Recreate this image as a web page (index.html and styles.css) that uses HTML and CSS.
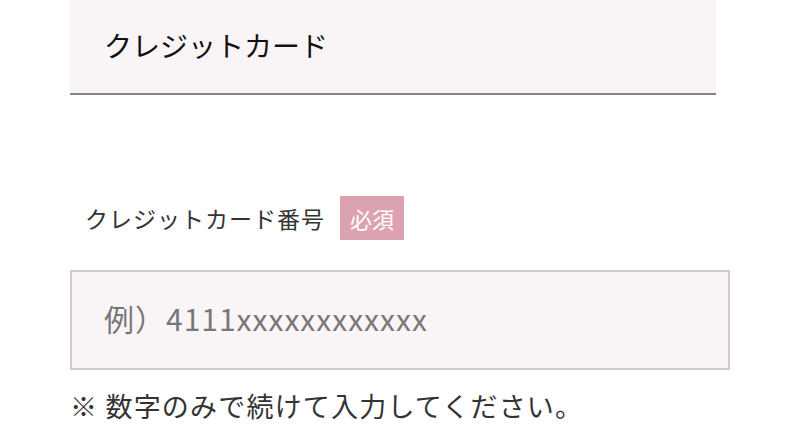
FILE: index.html
```html
<!DOCTYPE html>
<html lang="ja">
<head>
    <meta charset="UTF-8">
    <meta name="viewport" content="width=device-width, initial-scale=1.0">
    <title>クレジットカード</title>
    <link rel="stylesheet" href="styles.css">
</head>
<body>
    <div class="container">
        <h2 class="section-title">クレジットカード</h2>

        <div class="field">
            <label class="field-label" for="card-number">
                クレジットカード番号
                <span class="required">必須</span>
            </label>
            <input type="text" id="card-number" class="field-input" placeholder="例）4111xxxxxxxxxxxx">
            <p class="field-note">※ 数字のみで続けて入力してください。</p>
        </div>
    </div>
</body>
</html>
```

FILE: styles.css
```css
/* Basic Reset */
* {
    margin: 0;
    padding: 0;
    box-sizing: border-box;
}

body {
    font-family: "Noto Sans CJK JP", "Noto Sans", sans-serif;
    background: #fff;
    color: #333;
}

.container {
    width: 660px;
    margin-left: 70px;
}

/* Section title */
.section-title {
    width: 646px;
    height: 95px;
    display: flex;
    align-items: center;
    padding-left: 34px;
    padding-bottom: 4px;
    background: #f9f5f6;
    border-bottom: 2px solid #858585;
    font-size: 28px;
    font-weight: normal;
    color: #111;
}

/* Field */
.field {
    padding-top: 101px;
}

.field-label {
    display: flex;
    align-items: center;
    gap: 15px;
    padding-left: 15px;
    font-size: 23px;
    letter-spacing: 1px;
    color: #333;
}

.required {
    display: inline-flex;
    align-items: center;
    justify-content: center;
    width: 64px;
    height: 44px;
    background: #dca2b1;
    color: #fff;
    font-size: 22px;
    letter-spacing: 0;
}

.field-input {
    display: block;
    width: 660px;
    height: 100px;
    margin-top: 30px;
    padding-left: 32px;
    padding-bottom: 4px;
    background: #f9f5f6;
    border: 2px solid #cccccc;
    font-family: inherit;
    font-size: 30px;
    letter-spacing: 1px;
    color: #333;
    outline: none;
}

.field-input::placeholder {
    color: #777;
}

.field-note {
    margin-top: 16px;
    font-size: 27px;
    letter-spacing: 1.2px;
    color: #333;
}
```
